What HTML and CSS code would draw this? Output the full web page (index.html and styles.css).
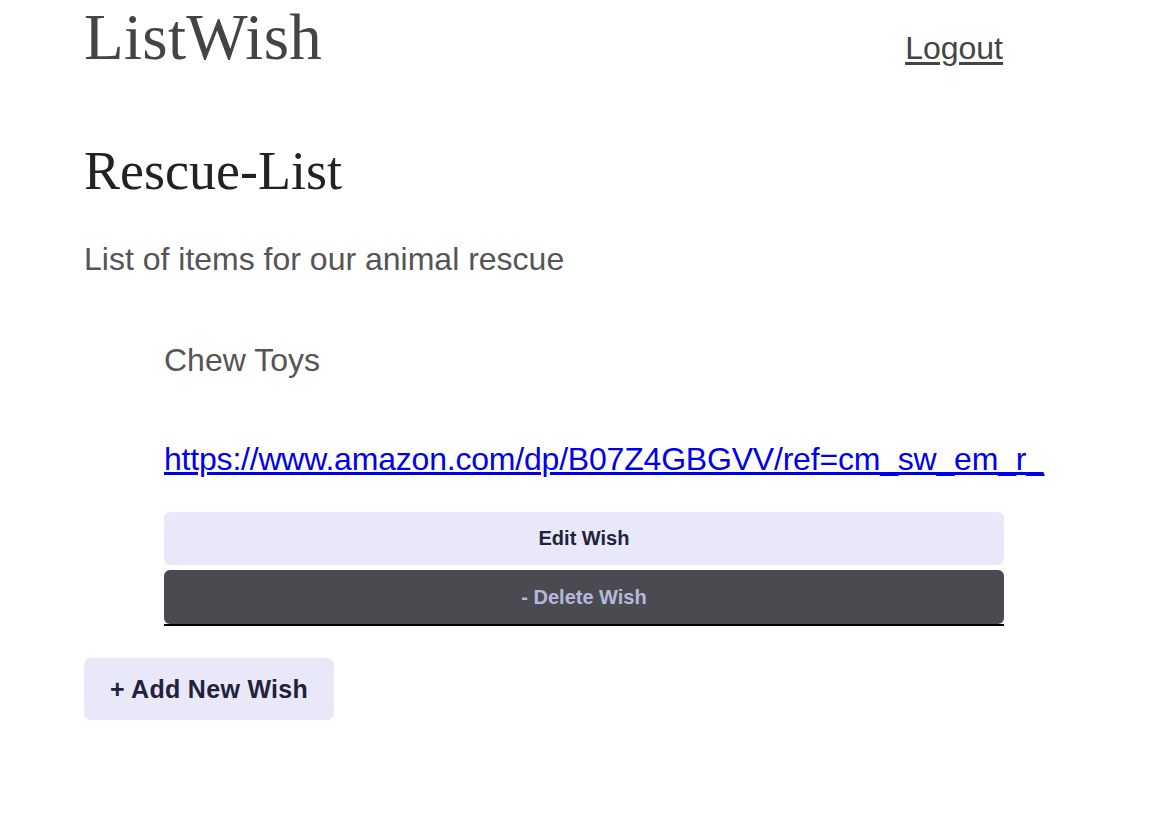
FILE: index.html
```html
<!DOCTYPE html>
<html lang="en">
<head>
<meta charset="utf-8">
<title>ListWish</title>
<link rel="stylesheet" href="styles.css">
</head>
<body>
<div class="page">
  <header class="header">
    <div class="brand">ListWish</div>
    <a class="logout" href="#">Logout</a>
  </header>
  <h2 class="list-title">Rescue-List</h2>
  <p class="list-desc">List of items for our animal rescue</p>
  <div class="wish">
    <p class="wish-name">Chew Toys</p>
    <a class="wish-link" href="#">https://www.amazon.com/dp/B07Z4GBGVV/ref=cm_sw_em_r_</a>
    <div class="wish-actions">
      <button class="btn btn-edit">Edit Wish</button>
      <button class="btn btn-delete">- Delete Wish</button>
    </div>
  </div>
  <button class="btn-add">+ Add New Wish</button>
</div>
</body>
</html>
```
FILE: styles.css
```css
html, body {
  margin: 0;
  padding: 0;
  background: #ffffff;
}
body {
  font-family: "Liberation Sans", Arial, sans-serif;
}
.page {
  width: 920px;
  margin-left: 84px;
}
.header {
  display: flex;
  justify-content: space-between;
  align-items: baseline;
  height: 74px;
}
.brand {
  font-family: "Liberation Serif", "Times New Roman", serif;
  font-size: 65px;
  line-height: 74px;
  color: #444444;
  letter-spacing: 0.3px;
}
.logout {
  font-size: 32px;
  color: #444444;
  text-decoration: underline;
  text-underline-offset: 3px;
  margin-right: 1px;
}
.list-title {
  font-family: "Liberation Serif", "Times New Roman", serif;
  font-weight: normal;
  font-size: 54px;
  line-height: 60px;
  color: #222222;
  margin: 67px 0 0 0;
}
.list-desc {
  font-size: 32px;
  line-height: 36px;
  color: #555555;
  margin: 40px 0 0 0;
}
.wish {
  margin: 65px 0 0 80px;
  width: 840px;
  border-bottom: 2px solid #000000;
}
.wish-name {
  font-size: 32px;
  line-height: 36px;
  color: #555555;
  margin: 0;
}
.wish-link {
  display: block;
  margin-top: 63px;
  font-size: 32px;
  line-height: 36px;
  letter-spacing: -0.2px;
  color: #0000ee;
  white-space: nowrap;
  text-decoration: underline;
}
.wish-actions {
  display: flex;
  flex-direction: column;
  gap: 5px;
  margin-top: 35px;
}
.btn {
  border: none;
  border-radius: 6px;
  font-family: "Liberation Sans", Arial, sans-serif;
  font-weight: bold;
  font-size: 20px;
  width: 100%;
  padding: 0;
}
.btn-edit {
  height: 53px;
  background: #e8e8f8;
  color: #22223b;
}
.btn-delete {
  height: 54px;
  background: #4a4b50;
  color: #b8b8dc;
}
.btn-add {
  display: block;
  margin-top: 32px;
  width: 250px;
  height: 62px;
  border: none;
  border-radius: 7px;
  background: #e8e8f8;
  color: #22223b;
  font-family: "Liberation Sans", Arial, sans-serif;
  font-weight: bold;
  font-size: 25px;
  letter-spacing: 0.3px;
  padding: 0;
}
```
